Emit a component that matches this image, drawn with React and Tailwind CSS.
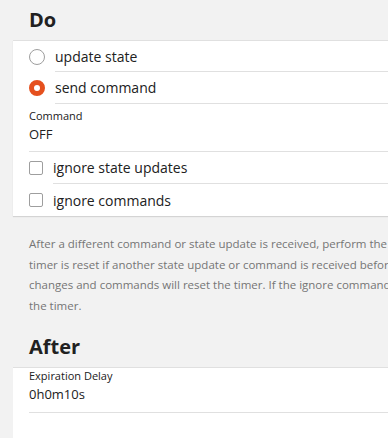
export default function App() {
  const font = { fontFamily: '"Open Sans", "DejaVu Sans", sans-serif' };
  return (
    <div className="w-[388px] h-[438px] overflow-hidden bg-[#f2f2f2] text-[#212121]" style={font}>
      <div className="w-[700px]">
        <h2 className="h-[40px] pl-[29px] flex items-center text-[20px] font-bold leading-none">Do</h2>
        <div className="ml-[13px] bg-white border-t border-[#e0e0e0] shadow-[0_1px_1px_rgba(0,0,0,0.12)]">
          <div className="flex items-center h-[31px] pl-[16px]">
            <span className="w-[16px] h-[16px] rounded-full border-[1.5px] border-[#9e9e9e] shrink-0" />
            <span className="ml-[10px] flex-1 h-full flex items-center border-b border-[#e0e0e0] text-[14px]">update state</span>
          </div>
          <div className="flex items-center h-[32px] pl-[16px]">
            <span className="w-[16px] h-[16px] rounded-full border-[5px] border-[#e5501e] shrink-0" />
            <span className="ml-[10px] flex-1 h-full flex items-center border-b border-[#e0e0e0] text-[14px]">send command</span>
          </div>
          <div className="ml-[16px] border-b border-[#e0e0e0] pt-[5px] pb-[7px]">
            <div className="text-[11px] leading-[14px]">Command</div>
            <div className="text-[13px] leading-[20px] mt-[1px]">OFF</div>
          </div>
          <div className="flex items-center h-[32px] pl-[16px]">
            <span className="w-[14px] h-[14px] rounded-[2px] border-[1.5px] border-[#9e9e9e] shrink-0" />
            <span className="ml-[10px] flex-1 h-full flex items-center border-b border-[#e0e0e0] text-[14px]">ignore state updates</span>
          </div>
          <div className="flex items-center h-[32px] pl-[16px]">
            <span className="w-[14px] h-[14px] rounded-[2px] border-[1.5px] border-[#9e9e9e] shrink-0" />
            <span className="ml-[10px] flex-1 h-full flex items-center text-[14px]">ignore commands</span>
          </div>
        </div>
        <p className="pl-[29px] pt-[18px] text-[11.5px] leading-[20.7px] text-[#757575] whitespace-nowrap">
          After a different command or state update is received, perform the chosen action when the timer expires. The
          <br />
          timer is reset if another state update or command is received before the timer expires. By default both state
          <br />
          changes and commands will reset the timer. If the ignore commands option is selected, commands will not reset
          <br />
          the timer.
        </p>
        <h2 className="h-[50px] pl-[29px] pt-[10px] flex items-center text-[20px] font-bold leading-none">After</h2>
        <div className="ml-[13px] bg-white border-t border-[#e0e0e0] h-[80px]">
          <div className="ml-[16px] border-b border-[#e0e0e0] pt-[1px] pb-[8px]">
            <div className="text-[11px] leading-[14px]">Expiration Delay</div>
            <div className="text-[13px] leading-[20px] mt-[1px]">0h0m10s</div>
          </div>
        </div>
      </div>
    </div>
  );
}
